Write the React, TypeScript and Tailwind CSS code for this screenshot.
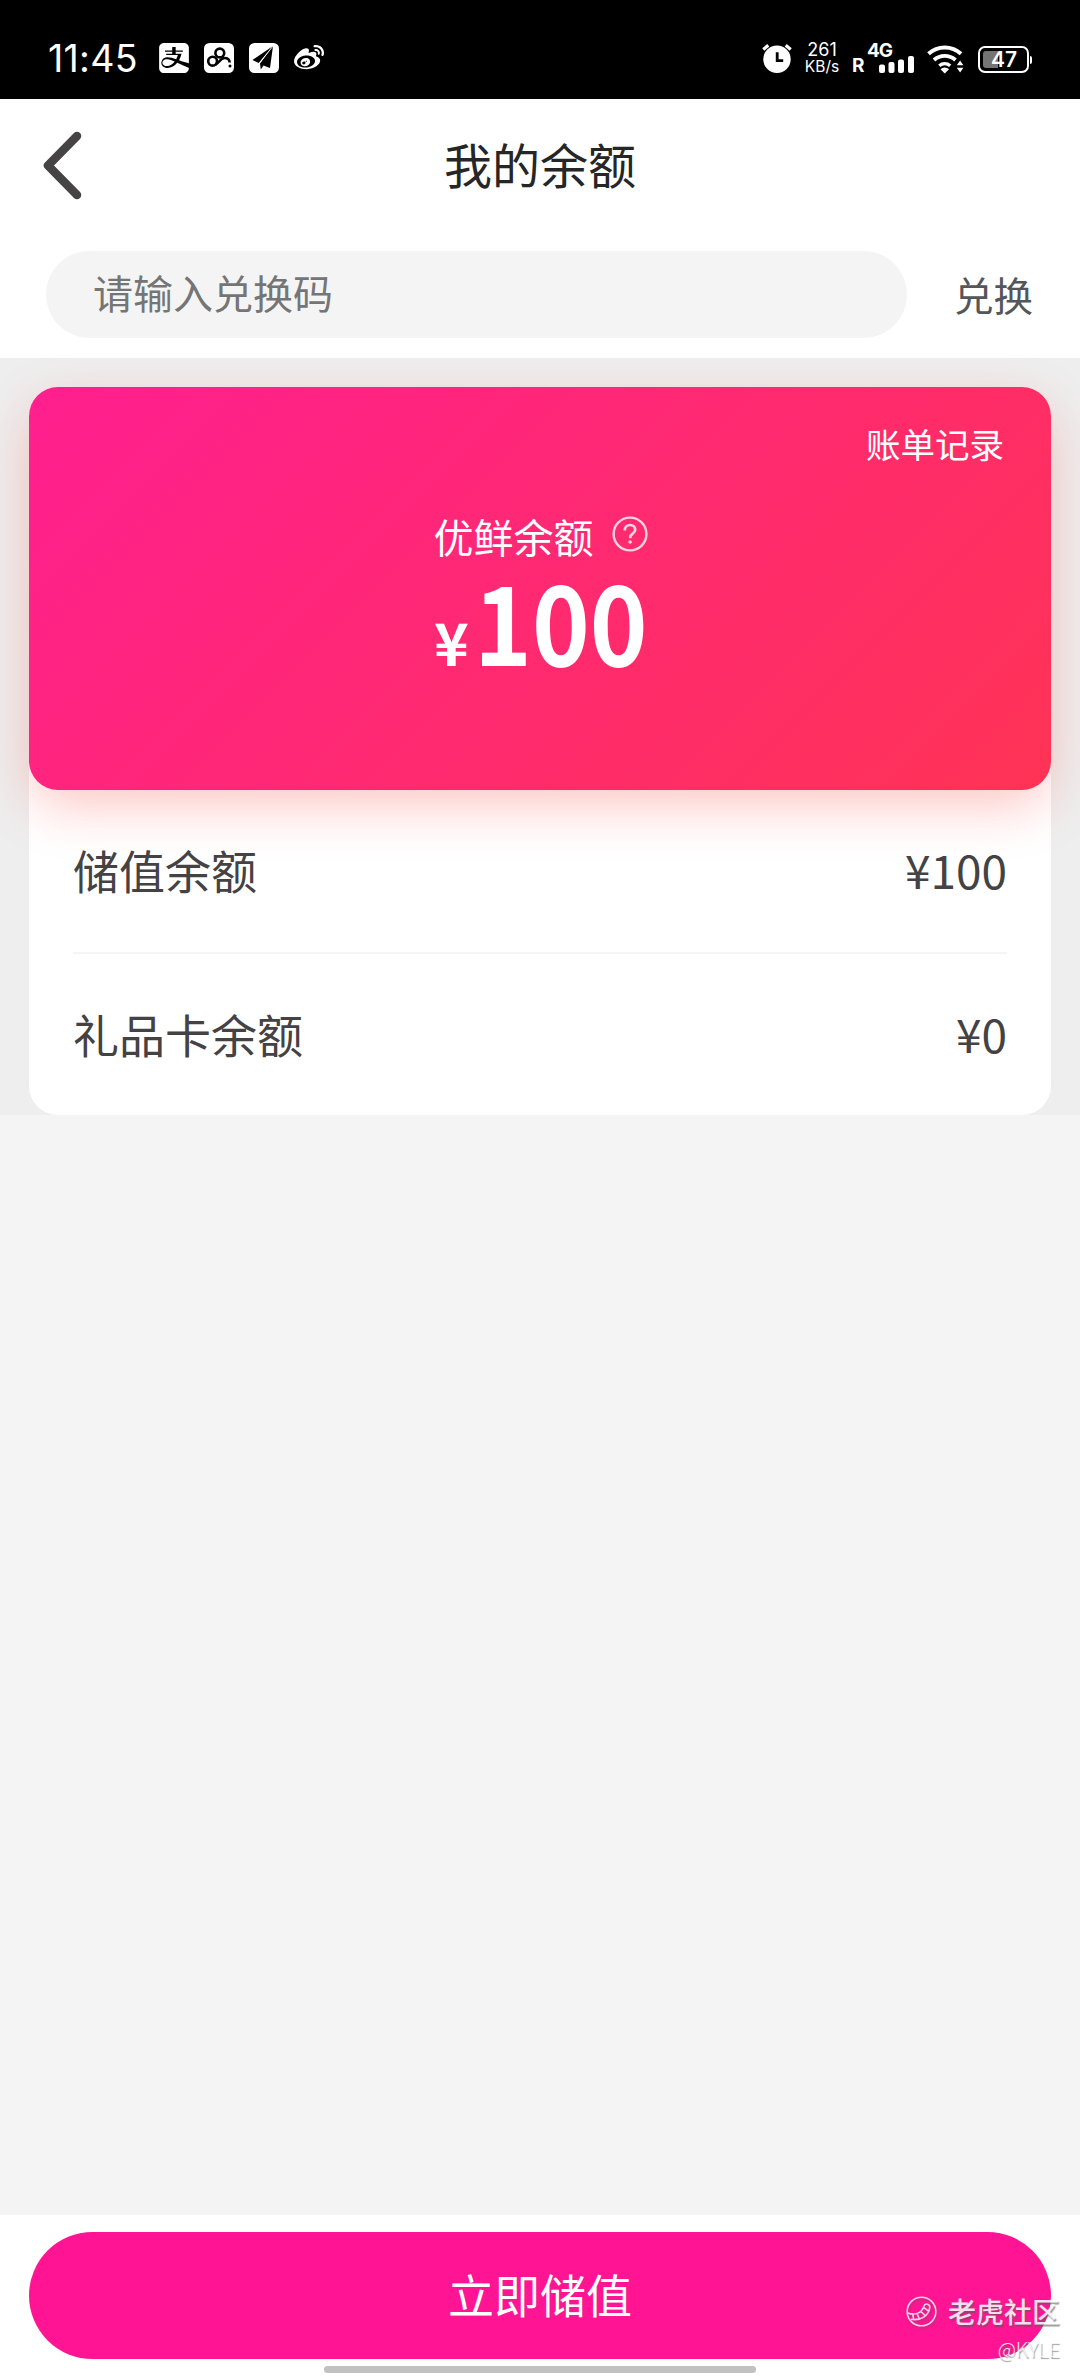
import { FaWeibo } from 'react-icons/fa';
import { SiAlipay } from 'react-icons/si';

const rows = [
    { label: '储值余额', value: '¥100' },
    { label: '礼品卡余额', value: '¥0' },
];

const CloudIcon = () => (
    <svg width="30" height="30" viewBox="0 0 30 30" fill="none">
        <rect width="30" height="30" rx="5.5" fill="#fff" />
        <g stroke="#000" strokeWidth="2.6">
            <circle cx="15.8" cy="10" r="4.4" />
            <circle cx="8.6" cy="18.2" r="4.4" />
            <path d="M11.5 21.5c3.5-1.5 5-6.5 9-6.5 3.3 0 5 1.8 5.2 4.5" />
        </g>
        <circle cx="26" cy="23" r="1.5" fill="#000" />
    </svg>
);

const PlaneIcon = () => (
    <svg width="30" height="30" viewBox="0 0 30 30">
        <rect width="30" height="30" rx="5.5" fill="#fff" />
        <path d="M24 3 3.5 17l6.2 3z" fill="#000" />
        <path d="M24 3 11 20.5l.8 6 2.7-4 6.5 2.5z" fill="#000" />
        <path d="M24 3 10.3 20.3" stroke="#fff" strokeWidth=".8" />
    </svg>
);

const AlarmIcon = () => (
    <svg width="30" height="30" viewBox="0 0 30 30" fill="none">
        <circle cx="15" cy="16.2" r="13.7" fill="#fff" />
        <path d="m1.3 6.5 5-4.3M28.7 6.5l-5-4.3" stroke="#fff" strokeWidth="3.2" />
        <path d="M15.2 9.3v8.4h6" stroke="#000" strokeWidth="2.8" />
    </svg>
);

const WifiIcon = () => (
    <svg width="37" height="29" viewBox="0 0 37 29" fill="none">
        <path d="M1.5 8.8a24 24 0 0 1 32.5 0" stroke="#fff" strokeWidth="4" />
        <path d="M7 15a16 16 0 0 1 21.5 0" stroke="#fff" strokeWidth="3.8" />
        <path d="M12.3 20.7a8.5 8.5 0 0 1 10.9 0" stroke="#fff" strokeWidth="3.4" />
        <path d="M13.5 24.3a6 6 0 0 1 8.5 0l-4.2 4.2z" fill="#fff" />
        <path d="m29.8 20.3 3.3-4.8 3.3 4.8zM29.8 22.8l3.3 4.8 3.3-4.8z" fill="#fff" />
    </svg>
);

const StatusBar = () => (
    <header className="h-[99px] bg-black text-white flex items-start justify-between pl-12 pr-12 pt-[43px] font-[Inter,sans-serif]">
        <div className="flex">
            <span className="w-[111px] text-[37.5px] leading-[32px] tracking-[0.3px]">11:45</span>
            <div className="flex gap-[15px]">
                <SiAlipay className="size-[30px]" />
                <CloudIcon />
                <PlaneIcon />
                <FaWeibo className="size-[30px]" />
            </div>
        </div>

        <div className="flex items-start">
            <AlarmIcon />
            <div className="ml-3 w-9 flex flex-col items-center text-[18px] leading-[14px] whitespace-nowrap">
                <span>261</span>
                <span className="mt-[3px] text-[15.5px] leading-[14px]">KB/s</span>
            </div>
            <div className="ml-3 flex items-end h-[30px] font-bold">
                <span className="text-[19px] leading-[14px] w-[15px]">R</span>
                <div className="flex flex-col justify-between h-[30px]">
                    <span className="text-[19px] leading-[15px] tracking-[-1.2px]">4G</span>
                    <svg width="48" height="17" viewBox="0 0 48 17" fill="#fff" className="-mt-3">
                        <rect x="12" y="8.5" width="6" height="8.5" rx="2" />
                        <rect x="21.5" y="6" width="6" height="11" rx="2" />
                        <rect x="31" y="3.5" width="6" height="13.5" rx="2" />
                        <rect x="41" y="0" width="6" height="17" rx="2" />
                    </svg>
                </div>
            </div>
            <div className="ml-3 mt-[2px]">
                <WifiIcon />
            </div>
            <div className="ml-[14px] mt-[3px] flex items-center">
                <div className="w-[51px] h-[27px] rounded-[7px] border-2 border-white p-[3px] flex items-center">
                    <div className="w-[15px] h-[17px] rounded-l-[3px] bg-[#747474]" />
                    <span className="-ml-[7px] text-[21px] leading-[17px] font-semibold">47</span>
                </div>
                <div className="ml-[1px] w-[2px] h-2 rounded-r bg-white" />
            </div>
        </div>
    </header>
);

export default function App() {
    return (
        <div className="relative w-[1080px] h-[2376px] flex flex-col bg-[#f4f4f4] overflow-hidden font-['Noto_Sans_CJK_SC',sans-serif]">
            <StatusBar />

            {/* Title */}
            <nav className="h-[132px] bg-white flex items-center px-[42px]">
                <svg width="42" height="70" viewBox="0 0 42 70" fill="none" className="w-[42px]">
                    <path d="M35 6 6 35.5 35 65" stroke="#454344" strokeWidth="8.5" strokeLinecap="round" strokeLinejoin="round" />
                </svg>
                <h1 className="flex-1 mr-[42px] pb-[5px] text-center text-[48px] leading-[70px] text-[#262626]">我的余额</h1>
            </nav>

            {/* Redeem code */}
            <div className="h-[127px] bg-white flex items-start pt-5 pl-[46px]">
                <input
                    type="text"
                    placeholder="请输入兑换码"
                    className="w-[861px] h-[87px] rounded-full bg-[#f4f4f4] px-[47px] pb-[5px] text-[40px] placeholder:text-[#757575] outline-none"
                />
                <button className="ml-[47px] h-[85px] text-[39.5px] text-[#54565a]">兑换</button>
            </div>

            {/* Balance */}
            <main className="bg-[#eeeeee] px-[29px] pt-[29px]">
                <div className="rounded-[29px] bg-white">
                    <section className="h-[403px] rounded-[29px] bg-linear-[135deg,#ff1f8f,#ff3355] text-white shadow-[0_18px_54px_-4px_rgba(245,60,50,0.3)] flex flex-col items-center">
                        <a className="self-end mr-[47px] mt-[31px] text-[34.5px] leading-[50px]">账单记录</a>
                        <div className="mt-[39px] ml-[1px] flex items-center">
                            <span className="text-[40px] leading-[58px]">优鲜余额</span>
                            <svg width="36" height="36" viewBox="0 0 36 36" fill="none" className="ml-[18px] -mt-[4px] opacity-80">
                                <circle cx="18" cy="18" r="16.4" stroke="#fff" strokeWidth="2.4" />
                                <path d="M12.8 14.5c0-3.5 2.2-5.5 5.2-5.5s5.2 2 5.2 4.8c0 3.7-5 4-5 7.5v1" stroke="#fff" strokeWidth="2.7" />
                                <circle cx="18.1" cy="26" r="1.8" fill="#fff" />
                            </svg>
                        </div>
                        <p className="mt-[3px] ml-[1px] flex items-baseline leading-[100px] font-bold">
                            <span className="text-[59px]">¥</span>
                            <span className="ml-[5px] w-[173px] text-[110px] origin-left scale-x-[0.892]">100</span>
                        </p>
                    </section>

                    <ul className="px-[44px] text-[46px] text-[#444243]">
                        {rows.map((row) => (
                            <li key={row.label} className="h-[164px] pb-[3px] flex items-center justify-between border-b-2 border-[#f4f4f4] last:h-[161px] last:border-0">
                                <span>{row.label}</span>
                                <span>{row.value}</span>
                            </li>
                        ))}
                    </ul>
                </div>
            </main>

            <footer className="mt-auto h-[161px] bg-white px-[29px] pt-[17px] flex flex-col items-center">
                <button className="w-full h-[127px] pb-[4px] shrink-0 rounded-full bg-[#ff1493] text-white text-[46px]">立即储值</button>
                <div className="mt-[7px] w-[432px] h-[7px] shrink-0 rounded-full bg-[#c1c1c1]" />
            </footer>

            {/* Watermark */}
            <div className="absolute right-[20px] bottom-[13px] flex flex-col items-end text-white/85 text-shadow-[1px_2px_1px_rgba(90,90,90,0.6)]">
                <div className="flex items-center gap-[11px]">
                    <svg width="31" height="31" viewBox="0 0 32 32" fill="none" stroke="#fff" strokeWidth="1.6" className="mt-[1px] opacity-80 drop-shadow-[1px_2px_1px_rgba(90,90,90,0.5)]">
                        <circle cx="16" cy="16" r="14.8" />
                        <path d="M2 17.5c6 2.5 14 1 16.5-7 1-3.5 6.5-2.5 6 1.5-1 8-9 14-19.5 12M7 19l1 5.5M11.5 18.5l2.5 5.5M15.5 16l4 4M18.5 12l4.8 3.5" />
                    </svg>
                    <span className="text-[28px] leading-[38px] font-medium">老虎社区</span>
                </div>
                <span className="mt-[4px] text-[20px] leading-[29px] font-light">@KYLE</span>
            </div>
        </div>
    );
}
